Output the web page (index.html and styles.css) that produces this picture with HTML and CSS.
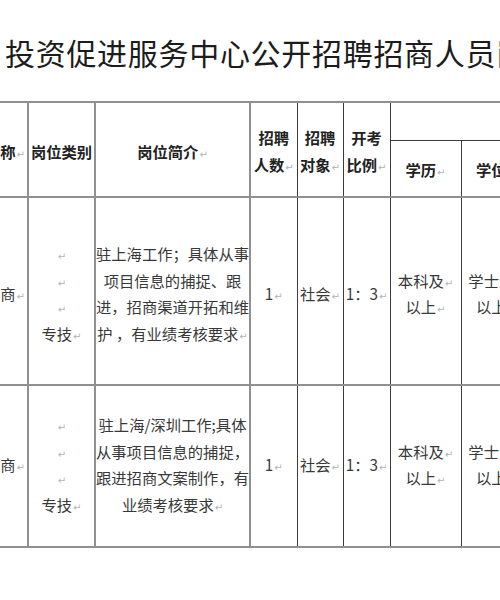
FILE: index.html
```html
<!DOCTYPE html>
<html lang="zh-CN">
<head>
<meta charset="utf-8">
<title>岗位表</title>
<link rel="stylesheet" href="styles.css">
</head>
<body>
<div class="page">
  <h1 class="title">投资促进服务中心公开招聘招商人员岗位表</h1>
  <div class="sheet">
    <table class="grid">
      <colgroup>
        <col class="w-name">
        <col class="w-type">
        <col class="w-desc">
        <col class="w-num">
        <col class="w-obj">
        <col class="w-ratio">
        <col class="w-edu">
        <col class="w-deg">
      </colgroup>
      <tr class="head-top">
        <th rowspan="2" class="c-name"><div class="clip">岗位名称<span class="pm">↵</span></div></th>
        <th rowspan="2">岗位类别</th>
        <th rowspan="2">岗位简介<span class="pm">↵</span></th>
        <th rowspan="2" class="thin">招聘<br>人数<span class="pm">↵</span></th>
        <th rowspan="2" class="thin">招聘<br>对象<span class="pm">↵</span></th>
        <th rowspan="2" class="thin">开考<br>比例<span class="pm">↵</span></th>
        <th colspan="2" class="thin cond"></th>
      </tr>
      <tr class="head-sub">
        <th class="thin sub">学历<span class="pm">↵</span></th>
        <th class="thin sub">学位<span class="pm">↵</span></th>
      </tr>
      <tr class="row-a">
        <td class="c-name"><div class="clip">投资招商<span class="pm">↵</span></div></td>
        <td><span class="pm">↵</span><br><span class="pm">↵</span><br><span class="pm">↵</span><br>专技<span class="pm">↵</span></td>
        <td class="desc">驻上海工作；具体从事<br>项目信息的捕捉、跟<br>进，招商渠道开拓和维<br>护 ，有业绩考核要求<span class="pm">↵</span></td>
        <td class="thin">1<span class="pm">↵</span></td>
        <td class="thin">社会<span class="pm">↵</span></td>
        <td class="thin">1：3<span class="pm">↵</span></td>
        <td class="thin">本科及<span class="pm">↵</span><br>以上<span class="pm">↵</span></td>
        <td class="thin">学士及<span class="pm">↵</span><br>以上<span class="pm">↵</span></td>
      </tr>
      <tr class="row-b">
        <td class="c-name"><div class="clip">投资招商<span class="pm">↵</span></div></td>
        <td><span class="pm">↵</span><br><span class="pm">↵</span><br><span class="pm">↵</span><br>专技<span class="pm">↵</span></td>
        <td class="desc">驻上海/深圳工作;具体<br>从事项目信息的捕捉，<br>跟进招商文案制作，有<br>业绩考核要求<span class="pm">↵</span></td>
        <td class="thin">1<span class="pm">↵</span></td>
        <td class="thin">社会<span class="pm">↵</span></td>
        <td class="thin">1：3<span class="pm">↵</span></td>
        <td class="thin">本科及<span class="pm">↵</span><br>以上<span class="pm">↵</span></td>
        <td class="thin">学士及<span class="pm">↵</span><br>以上<span class="pm">↵</span></td>
      </tr>
    </table>
  </div>
</div>
</body>
</html>
```

FILE: styles.css
```css
* { box-sizing: border-box; }
html, body { margin: 0; padding: 0; background: #ffffff; }
body {
  width: 500px;
  height: 600px;
  overflow: hidden;
  font-family: "Noto Sans CJK SC", "Noto Sans", sans-serif;
  color: #383838;
}
.page { width: 500px; }
.title {
  margin: 0;
  height: 101px;
  padding: 3px 0 0 5px;
  display: flex;
  align-items: center;
  font-size: 30px;
  font-weight: 400;
  letter-spacing: 0.7px;
  white-space: nowrap;
  overflow: hidden;
  color: #1c1c1c;
}
.sheet { width: 500px; overflow: hidden; }
.grid {
  border-collapse: collapse;
  table-layout: fixed;
  width: 531px;
}
.w-name { width: 28px; }
.w-type { width: 67px; }
.w-desc { width: 155px; }
.w-num { width: 47px; }
.w-obj { width: 46px; }
.w-ratio { width: 47px; }
.w-edu { width: 71px; }
.w-deg { width: 70px; }

.grid th, .grid td {
  border: 2px solid #909090;
  padding: 0;
  text-align: center;
  vertical-align: middle;
  font-size: 15.3px;
  line-height: 26.5px;
  white-space: nowrap;
  overflow: hidden;
}
.grid th {
  padding-top: 3px;
  font-weight: 700;
  color: #222222;
  line-height: 27px;
}
.grid .cond { padding-top: 0; }
.row-a td { padding-top: 4px; }
.row-b td { padding-top: 0; padding-bottom: 4px; }
.grid .thin {
  border-left: 1px solid #3c3c3c;
  border-right: 1px solid #3c3c3c;
}
.grid .cond { border-bottom: 1px solid #3c3c3c; }
.grid .sub { border-top: 1px solid #3c3c3c; }
.grid .c-name { border-left: none; }
.clip {
  display: flex;
  justify-content: flex-end;
  align-items: baseline;
  overflow: hidden;
  padding-right: 2px;
  white-space: nowrap;
}
.head-top { height: 38px; }
.head-sub { height: 57px; }
.row-a { height: 188px; }
.row-b { height: 162px; }
.pm {
  font-family: "DejaVu Sans", sans-serif;
  font-size: 10px;
  line-height: 0;
  font-weight: 400;
  color: #b3b3b3;
  margin-left: 1px;
}
```
